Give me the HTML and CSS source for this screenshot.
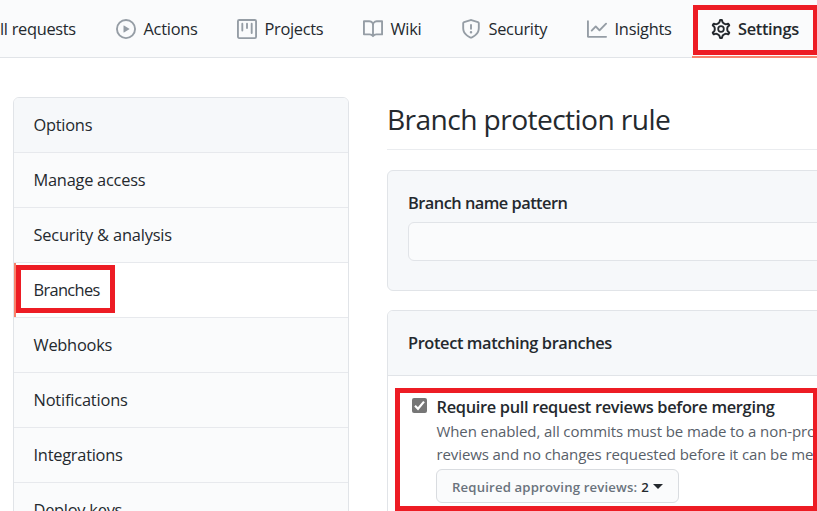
FILE: index.html
```html
<!DOCTYPE html>
<html lang="en">
<head>
<meta charset="utf-8">
<title>Branch protection rule</title>
<link rel="stylesheet" href="styles.css">
</head>
<body>
<nav class="tabs">
  <a class="tab tab-pulls"><span>ll requests</span></a>
  <a class="tab tab-actions"><svg class="icon" viewBox="0 0 16 16"><path fill-rule="evenodd" d="M1.5 8a6.5 6.5 0 1113 0 6.5 6.5 0 01-13 0zM8 0a8 8 0 100 16A8 8 0 008 0zM6.379 5.227A.25.25 0 006 5.442v5.117a.25.25 0 00.379.214l4.264-2.559a.25.25 0 000-.428L6.379 5.227z"/></svg><span>Actions</span></a>
  <a class="tab tab-projects"><svg class="icon" viewBox="0 0 16 16"><path fill-rule="evenodd" d="M1.75 0A1.75 1.75 0 000 1.75v12.5C0 15.216.784 16 1.75 16h12.5A1.75 1.75 0 0016 14.25V1.75A1.75 1.75 0 0014.25 0H1.75zM1.5 1.75a.25.25 0 01.25-.25h12.5a.25.25 0 01.25.25v12.5a.25.25 0 01-.25.25H1.75a.25.25 0 01-.25-.25V1.75zM11.75 3a.75.75 0 00-.75.75v7.5a.75.75 0 001.5 0v-7.5a.75.75 0 00-.75-.75zm-8.25.75a.75.75 0 011.5 0v5.5a.75.75 0 01-1.5 0v-5.5zM8 3a.75.75 0 00-.75.75v3.5a.75.75 0 001.5 0v-3.5A.75.75 0 008 3z"/></svg><span>Projects</span></a>
  <a class="tab tab-wiki"><svg class="icon" viewBox="0 0 16 16"><path fill-rule="evenodd" d="M0 1.75A.75.75 0 01.75 1h4.253c1.227 0 2.317.59 3 1.501A3.744 3.744 0 0111.006 1h4.245a.75.75 0 01.75.75v10.5a.75.75 0 01-.75.75h-4.507a2.25 2.25 0 00-1.591.659l-.622.621a.75.75 0 01-1.06 0l-.622-.621A2.25 2.25 0 005.258 13H.75a.75.75 0 01-.75-.75V1.75zm8.755 3a2.25 2.25 0 012.25-2.25H14.5v9h-3.757c-.71 0-1.4.201-1.992.572l.004-7.322zm-1.504 7.324l.004-5.073-.002-2.253A2.25 2.25 0 005.003 2.5H1.5v9h3.757a3.75 3.75 0 011.994.574z"/></svg><span>Wiki</span></a>
  <a class="tab tab-security"><svg class="icon" viewBox="0 0 16 16"><path fill-rule="evenodd" d="M7.467.133a1.75 1.75 0 011.066 0l5.25 1.68A1.75 1.75 0 0115 3.48V7c0 1.566-.32 3.182-1.303 4.682-.983 1.498-2.585 2.813-5.032 3.855a1.7 1.7 0 01-1.33 0c-2.447-1.042-4.049-2.357-5.032-3.855C1.32 10.182 1 8.566 1 7V3.48a1.75 1.75 0 011.217-1.667l5.25-1.68zm.61 1.429a.25.25 0 00-.153 0l-5.25 1.68a.25.25 0 00-.174.238V7c0 1.358.275 2.666 1.057 3.86.784 1.194 2.121 2.34 4.366 3.297a.2.2 0 00.154 0c2.245-.956 3.582-2.104 4.366-3.298C13.225 9.666 13.5 8.36 13.5 7V3.48a.25.25 0 00-.174-.237l-5.25-1.68zM9 10.5a1 1 0 11-2 0 1 1 0 012 0zm-.25-5.75a.75.75 0 10-1.5 0v3a.75.75 0 001.5 0v-3z"/></svg><span>Security</span></a>
  <a class="tab tab-insights"><svg class="icon" viewBox="0 0 16 16"><path fill-rule="evenodd" d="M1.5 1.75a.75.75 0 00-1.5 0v12.5c0 .414.336.75.75.75h14.5a.75.75 0 000-1.5H1.5V1.75zm14.28 2.53a.75.75 0 00-1.06-1.06L10 7.94 7.53 5.47a.75.75 0 00-1.06 0L3.22 8.72a.75.75 0 001.06 1.06L7 7.06l2.47 2.47a.75.75 0 001.06 0l5.25-5.25z"/></svg><span>Insights</span></a>
  <a class="tab tab-settings"><svg class="icon gear" viewBox="0 0 16 16"><path transform="translate(8 8) scale(1.115) translate(-8 -8)" d="M7.429 1.525a6.593 6.593 0 011.142 0c.036.003.108.036.137.146l.289 1.105c.147.56.55.967.997 1.189.174.086.341.183.501.29.417.278.97.423 1.53.27l1.102-.303c.11-.03.175.016.195.046.219.31.41.641.573.989.014.031.022.11-.059.19l-.815.806c-.411.406-.562.957-.53 1.456a4.588 4.588 0 010 .582c-.032.499.119 1.05.53 1.456l.815.806c.08.08.073.159.059.19a6.494 6.494 0 01-.573.99c-.02.029-.086.074-.195.045l-1.103-.303c-.559-.153-1.112-.008-1.529.27-.16.107-.327.204-.5.29-.449.222-.851.628-.998 1.189l-.289 1.105c-.029.11-.101.143-.137.146a6.613 6.613 0 01-1.142 0c-.036-.003-.108-.037-.137-.146l-.289-1.105c-.147-.56-.55-.967-.997-1.189a4.502 4.502 0 01-.501-.29c-.417-.278-.97-.423-1.53-.27l-1.102.303c-.11.03-.175-.016-.195-.046a6.492 6.492 0 01-.573-.989c-.014-.031-.022-.11.059-.19l.815-.806c.411-.406.562-.957.53-1.456a4.587 4.587 0 010-.582c.032-.499-.119-1.05-.53-1.456l-.815-.806c-.08-.08-.073-.159-.059-.19a6.44 6.44 0 01.573-.99c.02-.029.086-.075.195-.045l1.103.303c.559.153 1.112.008 1.529-.27.16-.107.327-.204.5-.29.449-.222.851-.628.998-1.189l.289-1.105c.029-.11.101-.143.137-.146z"/><circle cx="8" cy="8" r="2.25"/></svg><span>Settings</span></a>
</nav>
<div class="layout">
  <aside class="menu">
    <a class="menu-item heading"><span class="m-options">Options</span></a>
    <a class="menu-item"><span class="m-access">Manage access</span></a>
    <a class="menu-item"><span class="m-security">Security &amp; analysis</span></a>
    <a class="menu-item selected"><span class="m-branches">Branches</span></a>
    <a class="menu-item"><span class="m-webhooks">Webhooks</span></a>
    <a class="menu-item"><span class="m-notifications">Notifications</span></a>
    <a class="menu-item"><span class="m-integrations">Integrations</span></a>
    <a class="menu-item"><span class="m-keys">Deploy keys</span></a>
  </aside>
  <main class="content">
    <h1 class="title">Branch protection rule</h1>
    <section class="box pattern">
      <label class="label">Branch name pattern</label>
      <div class="input"></div>
    </section>
    <section class="box protect">
      <h2 class="box-header">Protect matching branches</h2>
      <div class="rule">
        <svg class="check" viewBox="0 0 15 15"><rect width="15" height="15" rx="2"/><path d="M3 7.8l3 3 6-7.2"/></svg>
        <div class="rule-body">
          <div class="rule-title">Require pull request reviews before merging</div>
          <p class="rule-line first">When enabled, all commits must be made to a non-pro</p>
          <p class="rule-line second">reviews and no changes requested before it can be me</p>
          <div class="select"><span class="select-label">Required approving reviews:</span><b>2</b><i class="caret"></i></div>
        </div>
      </div>
    </section>
  </main>
</div>
<div class="mark mark-settings"></div>
<div class="mark mark-branches"></div>
<div class="mark mark-rule"></div>
</body>
</html>
```
FILE: styles.css
```css
* { box-sizing: border-box; }
html, body { height: 511px; overflow: hidden; }
body {
  margin: 0;
  position: relative;
  background: #fff;
  color: #24292e;
  font-family: "Open Sans", "Noto Sans", sans-serif;
  font-size: 16.4px;
  line-height: 24px;
  white-space: nowrap;
}
.tabs {
  display: flex;
  height: 58px;
  background: #fafbfc;
  border-bottom: 1px solid #e1e4e8;
}
.tab {
  display: flex;
  flex: none;
  align-items: center;
  gap: 8px;
  height: 58px;
}
.icon { width: 20px; height: 20px; flex: none; fill: #959da5; }
.gear { fill: none; stroke: #24292e; stroke-width: 1.4; }
.tab-pulls { width: 115.5px; letter-spacing: -.3px; }
.tab-actions { width: 121px; letter-spacing: -.25px; }
.tab-projects { width: 126px; letter-spacing: -.3px; }
.tab-wiki { width: 98px; letter-spacing: -.3px; }
.tab-security { width: 126px; letter-spacing: -.3px; }
.tab-insights { width: 105.5px; letter-spacing: -.25px; }
.tab-settings {
  width: 130px;
  padding: 2px 0 0 19px;
  gap: 7px;
  border-bottom: 2px solid #f9826c;
  font-weight: 600;
  letter-spacing: -.33px;
}
.layout { display: flex; padding-left: 13px; gap: 38px; }
.menu {
  flex: none;
  width: 336px;
  height: 440px;
  margin-top: 39px;
  border: 1px solid #e1e4e8;
  border-radius: 6px;
  overflow: hidden;
}
.menu-item {
  display: flex;
  align-items: center;
  height: 55px;
  padding-left: 19.5px;
  background: #fafbfc;
  border-bottom: 1px solid #e7e9ed;
  letter-spacing: -.25px;
}
.m-security, .m-notifications { letter-spacing: -.18px; }
.m-branches { letter-spacing: -.65px; }
.heading { background: #f6f8fa; }
.selected { background: #fff; box-shadow: inset 2px 0 #f9826c; }
.content { flex: none; width: 460px; padding-top: 44px; }
.title {
  height: 48px;
  margin: 0 0 20px;
  border-bottom: 1px solid #eaecef;
  font-size: 28.2px;
  font-weight: 400;
  line-height: 35px;
  letter-spacing: -.6px;
}
.box { border: 1px solid #e1e4e8; border-radius: 6px; }
.pattern { height: 121px; margin-bottom: 19px; padding: 20px; background: #f6f8fa; }
.label { display: block; height: 31px; font-weight: 600; letter-spacing: -.53px; }
.input { height: 39px; border: 1px solid #e1e4e8; border-radius: 6px; background: #fafbfc; }
.protect { height: 230px; }
.box-header {
  height: 65px;
  margin: 0;
  padding: 20px;
  background: #f6f8fa;
  border-bottom: 1px solid #e1e4e8;
  border-radius: 5px 0 0 0;
  font-size: 16.4px;
  font-weight: 600;
  letter-spacing: -.39px;
}
.rule { display: flex; gap: 9.5px; padding: 19px 0 0 24px; }
.check { flex: none; width: 15px; height: 15px; margin-top: 3px; fill: #767676; }
.check path { fill: none; stroke: #fff; stroke-width: 2.2; }
.rule-title { height: 25px; font-weight: 600; letter-spacing: -.32px; }
.rule-line { height: 23px; margin: 0; font-size: 15px; line-height: 23px; color: #586069; letter-spacing: -.1px; }
.select {
  display: flex;
  align-items: center;
  width: 243px;
  height: 34px;
  margin: 3px 0 0 -.5px;
  padding: 1px 0 0 15px;
  border: 1px solid #d9dce0;
  border-radius: 6px;
  background: #fafbfc;
  font-size: 13.2px;
}
.select-label { color: #6a737d; font-weight: 600; letter-spacing: .15px; }
.select b { margin-left: 4px; font-weight: 600; }
.caret {
  margin-left: 4px;
  border: 5px solid transparent;
  border-top-color: #24292e;
  border-bottom: 0;
}
.mark { position: absolute; border: 5px solid #ed1c24; }
.mark-settings { left: 693px; top: 5px; width: 125px; height: 50px; }
.mark-branches { left: 16px; top: 265px; width: 99px; height: 48px; }
.mark-rule { left: 395px; top: 388px; width: 423px; height: 123px; }
```
